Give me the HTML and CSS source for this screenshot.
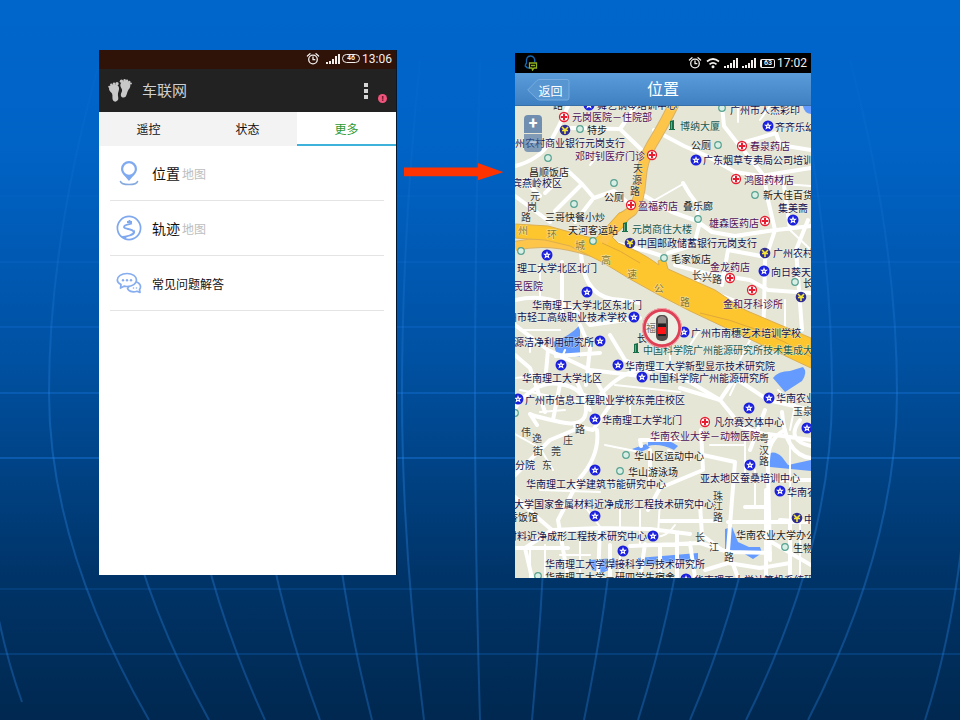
FILE: index.html
```html
<!DOCTYPE html>
<html lang="zh-CN">
<head>
<meta charset="utf-8">
<meta name="viewport" content="width=device-width, initial-scale=1">
<title>车联网</title>
<link rel="stylesheet" href="styles.css">
</head>
<body>
<svg class="backdrop" viewBox="0 0 960 720" preserveAspectRatio="none" aria-hidden="true">
  <defs>
    <linearGradient id="fade" x1="0" y1="0" x2="0" y2="720" gradientUnits="userSpaceOnUse">
      <stop offset="0" stop-color="#2a86e6" stop-opacity="0"/>
      <stop offset=".3" stop-color="#2a86e6" stop-opacity=".15"/>
      <stop offset=".6" stop-color="#2a86e6" stop-opacity=".35"/>
      <stop offset="1" stop-color="#1d6cc0" stop-opacity=".45"/>
    </linearGradient>
  </defs>
  <g class="latitudes">
    <path d="M0 196H960" opacity=".25"/><path d="M0 262H960" opacity=".4"/><path d="M0 327H960" opacity=".6"/><path d="M0 393H960" opacity=".8"/><path d="M0 458H960"/><path d="M0 589H960" opacity=".4"/><path d="M0 654H960" opacity=".5"/>
  </g>
  <g class="meridians">
    <path d="M-22 393Q-22 580 22 702"/>
    <path d="M100 60Q49 240 49 393T149 720"/>
    <path d="M155 60Q113 240 113 393T209 720"/>
    <path d="M225 60Q185 240 185 393T265 720"/>
    <path d="M290 60Q255 240 255 393T320 720"/>
    <path d="M355 60Q328 240 328 393T372 720"/>
    <path d="M420 60Q402 240 402 393T424 720"/>
    <path d="M480 60Q475 240 475 393T480 720"/>
    <path d="M535 60Q548 240 548 393T532 720"/>
    <path d="M595 60Q620 240 620 393T584 720"/>
    <path d="M660 60Q693 240 693 393T638 720"/>
    <path d="M725 60Q764 240 764 393T690 720"/>
    <path d="M795 60Q832 240 832 393T746 720"/>
    <path d="M850 60Q897 240 897 393T808 720"/>
    <path d="M970 393Q970 580 925 720"/>
  </g>
</svg>

<svg class="sprite" aria-hidden="true">
  <symbol id="alarm" viewBox="0 0 14 14">
    <g fill="none" stroke="currentColor" stroke-width="1.3" stroke-linecap="round"><circle cx="7" cy="7.5" r="4.3"/><path d="M7 5v2.7h1.8M1.4 4 4 1.7M12.600 4 10 1.700"/></g>
  </symbol>
  <symbol id="signal" viewBox="0 0 14 12">
    <path fill="currentColor" d="M0 9h2v2H0zM3 8h2v3H3zM6 6h2v5H6zM9 3h2v8H9zM12 1h2v10h-2z"/>
  </symbol>
  <symbol id="wifi" viewBox="0 0 14 12">
    <path fill="none" stroke="currentColor" stroke-width="1.700" d="M1 4.500q6-5 12 0M3.500 7.300q3.500-3 7 0"/><circle cx="7" cy="9.800" r="1.500" fill="currentColor"/>
  </symbol>
</svg>

<main class="slide">
  <section class="phone phone-list" aria-label="车联网">
    <div class="status status-warm">
      <svg class="ico-alarm"><use href="#alarm"/></svg>
      <svg class="ico-signal"><use href="#signal"/></svg>
      <span class="battery battery-pill">46</span>
      <time>13:06</time>
    </div>
    <header class="bar-dark">
      <svg class="feet" viewBox="0 0 24 24" aria-hidden="true">
        <g fill="#c8c8c8">
          <path d="M1 10c0-3.500 3-5.500 7-4.500 3.500 1 3.500 4.500 2.500 7-1 2.500-.5 4-.2 6.500.4 3-3.500 5-5.200 2.500C3.800 19.500 5 17 4 14.500 3.200 13 1 12 1 10z"/>
          <path d="M12.500 5c2-4.500 9-4 9.800.5.4 3.500-1.600 4.500-2.700 7-1 2.300-1 6-4 6-3.200 0-3.200-3.300-2-5.300 1-2 .3-3-.5-4.500-.7-1.500-1-2.400-.6-3.700z"/>
          <circle cx="1.300" cy="7.800" r="1.100"/><circle cx="3.300" cy="5.700" r="1.200"/><circle cx="6" cy="4.700" r="1.200"/><circle cx="9" cy="4.800" r="1.700"/>
          <circle cx="13.500" cy="2.200" r="1.700"/><circle cx="16.600" cy="1.300" r="1.200"/><circle cx="19" cy="1.700" r="1.200"/><circle cx="21.300" cy="2.900" r="1.200"/><circle cx="22.900" cy="4.600" r="1"/>
        </g>
      </svg>
      <h1>车联网</h1>
      <button class="menu" type="button" aria-label="菜单"><i></i><i></i><i></i></button>
      <span class="alert">!</span>
    </header>
    <nav class="tabs">
      <button type="button">遥控</button>
      <button type="button">状态</button>
      <button type="button" class="active">更多</button>
    </nav>
    <ul class="rows">
      <li><a href="#map">
        <svg viewBox="0 0 26 26" aria-hidden="true"><path fill="#80aaf0" fill-rule="evenodd" d="M13 1a8 8 0 0 1 8 8c0 5-5 7.500-8 12-3-4.500-8-7-8-12a8 8 0 0 1 8-8zm0 2.200A5.800 5.800 0 1 0 13 14.800 5.800 5.800 0 0 0 13 3.200z"/><path fill="none" stroke="#86a9df" stroke-width="1.600" stroke-linecap="round" d="M4.500 21.500c1 4 16 4 17 0"/></svg>
        <span class="big">位置</span><small>地图</small></a></li>
      <li><a href="#track">
        <svg viewBox="0 0 26 26" aria-hidden="true"><circle cx="13" cy="13" r="11.600" fill="none" stroke="#7fa8ee" stroke-width="1.700"/><path fill="none" stroke="#7fa8ee" stroke-width="1.800" stroke-linejoin="round" d="M13.500 5v3M11 7h5M16 8.500c-3 1-8 1.300-8 3.500 0 2.500 9.500 1.500 9.500 5"/><path fill="#7fa8ee" d="M18 14.500c2.500 3 .5 5.500-3 6.500-3 .8-5 1-5.500 3-2-.3-4-1.500-5-3 6 0 13-1.500 13.500-6.500z"/></svg>
        <span class="big">轨迹</span><small>地图</small></a></li>
      <li><a href="#faq">
        <svg viewBox="0 0 26 26" aria-hidden="true"><g fill="#fff" stroke="#86adf0" stroke-width="1.700" stroke-linejoin="round"><path d="M17.500 11.500c6 0 8.500 4.500 6 8l.5 3-3-1.300c-4.500 1.500-9 0-9.500-3z"/><path d="M11 3.500c5.500 0 9.500 2.800 9.500 6.500s-4 6.500-9.500 6.500c-1 0-2-.1-3-.3L4.500 18l.5-3.400C2.800 13.500 1.300 12 1.300 10c0-3.700 4.200-6.500 9.700-6.500z"/></g><g fill="#86adf0"><circle cx="7" cy="10.300" r="1.200"/><circle cx="11" cy="10.300" r="1.200"/><circle cx="15" cy="10.300" r="1.200"/><circle cx="17.500" cy="18" r=".8"/><circle cx="20.500" cy="18" r=".8"/></g></svg>
        <span>常见问题解答</span></a></li>
    </ul>
  </section>

  <svg class="arrow" viewBox="0 0 98 18" aria-hidden="true"><path fill="#f30" d="M0 4.500H73V0L98 9 73 17V13H0z"/></svg>

  <section class="phone phone-map" aria-label="位置">
    <div class="status status-black">
      <svg class="qq" viewBox="0 0 14 16" aria-hidden="true"><path fill="none" stroke="#1767ad" stroke-width="1.300" d="M5 13c-2 0-3-.5-2.700-1.500C1 12 .7 10.500 2.500 8 2 4 3 1 6.500 1S11 4 10.700 7"/><path fill="none" stroke="#8db021" stroke-width="1.300" d="M5.500 8h7v5H10l-1.500 2L8 13H5.500zM7 10.500h4"/></svg>
      <svg class="ico-alarm"><use href="#alarm"/></svg>
      <svg class="ico-wifi"><use href="#wifi"/></svg>
      <svg class="ico-signal"><use href="#signal"/></svg>
      <svg class="ico-signal"><use href="#signal"/></svg>
      <span class="battery battery-box">63</span>
      <time>17:02</time>
    </div>
    <header class="bar-blue">
      <button class="back" type="button">
        <svg viewBox="0 0 43 24" preserveAspectRatio="none" aria-hidden="true"><path fill="#5796d1" stroke="#77ace0" d="M.7 12 10 2.500Q11 1.500 13 1.500H40Q42 1.500 42 3.500V20Q42 22 40 22H13Q11 22 10 21z"/></svg>
        <span>返回</span>
      </button>
      <h2>位置</h2>
    </header>
    <div class="map">
      <svg class="map-canvas" viewBox="515 106 296 472" role="img" aria-label="地图">
        <defs>
          <g id="star"><circle r="5.500" fill="#1b20dc"/><path fill="#fff" d="M0-4 1-1.300 4-1.200 1.700.6 2.600 3.600 0 2-2.600 3.600-1.700.6-4-1.200-1-1.300z"/><circle cy=".3" r=".8" fill="#1b20dc"/></g>
          <g id="cross"><circle r="4.500" fill="#fff" stroke="#e51f31" stroke-width="1.300"/><path fill="#e51f31" d="M-1-3.200h2V-1h2.200v2H1v2.200h-2V1h-2.200v-2H-1z"/></g>
          <g id="bank"><circle r="5.300" fill="#302f91"/><path fill="none" stroke="#f5e536" stroke-width="1.600" d="M-3-3 0 0 3-3M0 0v4M-3 .5h6"/></g>
          <g id="dot"><circle r="3.300" fill="#d9efe6" stroke="#58a392" stroke-width="1.200"/></g>
          <g id="tower"><path fill="#17704a" d="M-2-4 2-5V4h1v1h-6V4h1z"/><path stroke="#8fc4a9" stroke-width=".7" d="M-.5-3V4"/></g>
        </defs>
        <rect x="515" y="106" width="296" height="472" fill="#e5e6d6"/>

        <g class="water">
          <path d="M553 342Q570 336 580 325V357L556 352z"/>
          <path d="M773 378Q778 371 790 371L803 367Q808 372 802 381L785 392z"/>
          <path d="M632 449 646 444 650 448 638 453zM648 441Q664 436 678 446L674 450Q660 443 648 446z"/>
          <path d="M770 453Q776 451 782 457L788 465 811 460V471L770 467z"/>
          <path d="M725 529 732 527 738 542 749 547 760 547 762 553 753 559 743 553 725 549z"/>
          <path d="M590 560 614 558 618 566 602 573 592 570zM638 558 698 553V560L638 566z"/>
          <path d="M803 106H811V114Q804 113 803 106z"/>
        </g>

        <g class="roads">
          <g class="wide">
            <path d="M568 106Q558 130 548 145T515 166M571 128 620 129 650 158M620 129 636 106"/>
            <path d="M545 193 568 171 582 184 555 211M582 184 594 198 614 191 633 207M592 200 575 222"/>
            <path d="M515 196 550 222M524 180 540 196"/>
            <path d="M654 130 684 146 707 156 735 172 760 176 811 168"/>
            <path d="M722 106 724 126 738 144 776 133 780 145 811 150"/>
            <path d="M683 183Q689 194 697 204L698 222 712 232 735 236 768 231 811 226"/>
            <path d="M640 193 672 212 700 222M700 222 694 245 668 253"/>
            <path d="M764 176 768 200 775 230 765 260 764 310 763 330M745 152 764 176"/>
            <path d="M783 178 790 229M808 220 796 250 802 330"/>
            <path d="M600 240Q640 248 662 256M675 265 705 273 750 280 768 290 811 293M700 273 696 286 738 302"/>
            <path d="M722 285 728 250 766 257"/>
            <path d="M562 262V318M581 250Q582 300 622 300L640 303M515 300Q560 290 590 325L640 318"/>
            <path d="M515 325 548 350 590 370 640 376M548 350 546 372M580 325 590 348 586 385"/>
            <path d="M515 355 530 368 545 412M556 356 600 353M610 335 625 360 650 372"/>
            <path d="M590 370 610 405 593 430 575 426M600 395Q640 350 690 382L720 400"/>
            <path d="M515 408Q535 380 560 384T586 408 560 422 530 414M530 414 537 425M560 384 553 420M575 378 590 410"/>
            <path d="M597 430Q600 455 580 478L558 520 568 578M574 430 550 440 515 475"/>
            <path d="M680 388 720 400 742 427 770 436 768 460M720 400 735 378 768 400 811 410M765 410 750 450"/>
            <path d="M701 430 703 470 660 488 648 510M703 455 735 462 728 550 738 578M641 446 640 440 680 440"/>
            <path d="M785 430Q765 440 768 470L770 560M782 412Q785 455 811 458M768 434 811 440M800 420Q785 440 811 446"/>
            <path d="M735 480H811M745 507H768M780 520 811 522M766 490V578M728 522H811M768 540 811 565M790 578V522"/>
            <path d="M660 521H720M700 505 702 535 722 550M650 450 650 480"/>
            <path d="M515 497 538 518 552 530 600 528 650 529 690 534M552 530 525 548 532 578M600 528 598 578M515 548H568"/>
            <path d="M630 546 700 543 728 552 770 553M640 578 645 544M660 578V545M677 534V578M695 578 690 543M610 545V578M705 570 728 563 760 568 790 563"/>
          </g>
          <g class="thin">
            <path d="M515 378 545 375M520 330H560M520 390 580 402M540 412 565 410M575 390 598 400M615 385 680 392M630 395V420M530 352V340M565 350 560 362M515 434 540 448 553 470M605 445 640 452M668 450 690 460M610 488H640M540 490 600 492M580 500 610 540M620 500V540M640 510V544M660 500 658 535M675 525Q665 540 650 536M730 395 738 378M778 390 795 405 790 430M745 440V475M710 445H745M755 470V505M790 440V520M800 525V578M785 300V330M738 106V122M760 120 770 106M590 165 600 153M655 200 683 184M755 182 811 186M790 230 811 250M730 320 750 340 740 360M700 330 690 345M780 345 811 350M670 345V365M540 265 540 300M530 550V578M545 545V578M560 555H590M580 540V575M620 548V575"/>
          </g>
        </g>

        <g class="motorways">
          <path class="casing narrow" d="M515 246Q545 239 578 248T612 259"/>
          <path class="fill narrow" d="M515 246Q545 239 578 248T612 259"/>
          <path class="casing avenue" d="M674 104Q662 128 652 144 642 160 641 180T632 211Q614 222 603 243"/>
          <path class="trunk" d="M515 224 548 226 588 237 596 238Q608 226 619 213L631 209Q632 222 612 237L618 243Q640 251 659 265L658 261 665 258 668 269 715 290 745 310 778 324 811 338V368L690 311 657 294 630 279 602 262 570 246 545 240 515 238z"/>
          <path class="fill avenue" d="M674 104Q662 128 652 144 642 160 641 180T632 211Q614 222 603 243"/>
          <path class="seam" d="M602 243Q620 250 640 263M700 313Q760 325 811 357"/>
        </g>

        <g class="icons">
          <use href="#star" x="589" y="105"/><use href="#star" x="768" y="126"/><use href="#star" x="696" y="160"/><use href="#star" x="793" y="220"/><use href="#star" x="547" y="255"/><use href="#star" x="764" y="271"/><use href="#star" x="587" y="292"/><use href="#star" x="634" y="317"/><use href="#star" x="684" y="332"/><use href="#star" x="600" y="341"/><use href="#star" x="561" y="365"/><use href="#star" x="618" y="365"/><use href="#star" x="642" y="377"/><use href="#star" x="518" y="399"/><use href="#star" x="595" y="419"/><use href="#star" x="769" y="398"/><use href="#star" x="749" y="408"/><use href="#star" x="807" y="428"/><use href="#star" x="595" y="470"/><use href="#star" x="750" y="465"/><use href="#star" x="780" y="491"/><use href="#star" x="595" y="516"/><use href="#star" x="653" y="536"/><use href="#star" x="623" y="551"/><use href="#star" x="686" y="579"/>
          <use href="#cross" x="564" y="117"/><use href="#cross" x="652" y="155"/><use href="#cross" x="742" y="146"/><use href="#cross" x="736" y="179"/><use href="#cross" x="765" y="221"/><use href="#cross" x="631" y="205"/><use href="#cross" x="730" y="278"/><use href="#cross" x="752" y="290"/><use href="#cross" x="705" y="422"/>
          <use href="#bank" x="565" y="130"/><use href="#bank" x="630" y="243"/><use href="#bank" x="765" y="253"/><use href="#bank" x="801" y="297"/><use href="#bank" x="797" y="518"/>
          <use href="#dot" x="722" y="108"/><use href="#dot" x="580" y="129"/><use href="#dot" x="548" y="158"/><use href="#dot" x="718" y="145"/><use href="#dot" x="755" y="195"/><use href="#dot" x="614" y="183"/><use href="#dot" x="574" y="204"/><use href="#dot" x="698" y="219"/><use href="#dot" x="593" y="241"/><use href="#dot" x="521" y="251"/><use href="#dot" x="664" y="258"/><use href="#dot" x="795" y="282"/><use href="#dot" x="515" y="413"/><use href="#dot" x="626" y="455"/><use href="#dot" x="620" y="471"/><use href="#dot" x="785" y="547"/><use href="#dot" x="538" y="576"/>
          <use href="#tower" x="672" y="125"/><use href="#tower" x="625" y="227"/><use href="#tower" x="636" y="348"/>
        </g>

        <g class="labels" transform="translate(0 4)">
          <g class="school">
            <text x="597" y="105">舞艺钢琴培训中心</text><text x="730" y="110">广州市人杰彩印</text>
            <text x="515" y="143">州农村商业银行元岗支行</text><text x="775" y="127">齐齐乐幼儿</text>
            <text x="703" y="160">广东烟草专卖局公司培训</text><text x="512" y="183">宾燕岭校区</text><text x="778" y="208">集美斋</text>
            <text x="637" y="243">中国邮政储蓄银行元岗支行</text><text x="773" y="253">广州农村</text><text x="771" y="272">向日葵天</text>
            <text x="517" y="268">理工大学北区北门</text><text x="532" y="305">华南理工大学北区东北门</text>
            <text x="507" y="317">州市轻工高级职业技术学校</text><text x="691" y="333">广州市南穗艺术培训学校</text>
            <text x="514" y="342">源洁净利用研究所</text><text x="522" y="378">华南理工大学北区</text>
            <text x="625" y="366">华南理工大学新型显示技术研究院</text><text x="649" y="378">中国科学院广州能源研究所</text>
            <text x="525" y="400">广州市信息工程职业学校东莞庄校区</text><text x="602" y="420">华南理工大学北门</text>
            <text x="776" y="398">华南农业</text><text x="714" y="422">凡尔赛文体中心</text><text x="515" y="465">分院</text>
            <text x="526" y="484">华南理工大学建筑节能研究中心</text><text x="700" y="478">亚太地区蚕桑培训中心</text><text x="787" y="492">华南农</text>
            <text x="514" y="504">大学国家金属材料近净成形工程技术研究中心</text><text x="507" y="536">材料近净成形工程技术研究中心</text>
            <text x="804" y="519">中</text><text x="545" y="564">华南理工大学焊接科学与技术研究所</text><text x="694" y="580">华南理工大学计算机系统研</text>
          </g>
          <g class="medical">
            <text x="572" y="117">元岗医院－住院部</text><text x="575" y="156">邓时钊医疗门诊</text><text x="750" y="146">春泉药店</text><text x="744" y="180">鸿图药材店</text>
            <text x="709" y="223">雄森医药店</text><text x="638" y="206">盈福药店</text><text x="710" y="267">金龙药店</text><text x="723" y="304">金和牙科诊所</text><text x="513" y="286">民医院</text><text x="650" y="436">华南农业大学－动物医院</text>
          </g>
          <g class="building">
            <text x="680" y="126">博纳大厦</text><text x="632" y="229">元岗商住大楼</text><text x="643" y="350">中国科学院广州能源研究所技术集成大</text>
          </g>
          <g class="place">
            <text x="553" y="105">路</text><text x="587" y="130">特步</text><text x="529" y="172">昌顺饭店</text><text x="691" y="145">公厕</text><text x="763" y="195">新大佳百货</text><text x="604" y="197">公厕</text>
            <text x="683" y="206">叠乐廊</text><text x="545" y="217">三哥快餐小炒</text><text x="568" y="230">天河客运站</text><text x="671" y="259">毛家饭店</text><text x="803" y="283">长</text>
            <text x="634" y="456">华山区运动中心</text><text x="628" y="472">华山游泳场</text><text x="508" y="517">香饭馆</text><text x="736" y="535">华南农业大学办公</text><text x="793" y="548">生物</text><text x="545" y="577">华南理工大学－研四学生宿舍</text>
            <text x="646" y="328">福居</text><text x="637" y="338">长</text>
          </g>
          <g class="street">
            <text x="633 632 630" y="168 180 191">天源路</text><text x="530 527 521" y="196 207 217">元岗路</text><text x="692 702 712" y="275 277 279">长兴路</text>
            <text x="793 803" y="411 411">玉泉</text><text x="759 759 759" y="438 450 461">粤汉路</text><text x="521 532 533" y="432 438 451">伟逸街</text>
            <text x="542 551 563 575" y="465 451 440 429">东莞庄路</text><text x="713 713 713" y="496 506 517">珠江路</text><text x="695 709 724" y="537 547 557">长江路</text>
          </g>
          <g class="motorway-name"><text x="518 547 575 601 627 654 680" y="230 234 245 260 274 288 302">州环城高速公路</text></g>
        </g>

        <g class="vehicle">
          <circle cx="662" cy="328" r="18" fill="#fff" fill-opacity=".35" stroke="#de4155" stroke-width="3.500"/>
          <circle cx="662" cy="328" r="19.500" fill="none" stroke="#f5a6ad"/>
          <rect x="656" y="315" width="12" height="26" rx="5" fill="#514b49"/>
          <path fill="#918a87" d="M658 318Q662 314 666 318V323H658z"/>
          <rect x="658" y="324" width="8" height="12" rx="1" fill="#241f20"/>
          <rect x="658" y="327" width="8" height="7" fill="#ff1417"/>
        </g>
      </svg>
      <div class="zoom">
        <button type="button" aria-label="放大">+</button>
        <button type="button" aria-label="缩小">−</button>
      </div>
    </div>
  </section>
</main>
</body>
</html>
```
FILE: styles.css
```css
* { box-sizing: border-box; }

body {
  margin: 0;
  min-height: 100vh;
  position: relative;
  overflow-x: hidden;
  background: linear-gradient(#0066cc 0%, #0063c6 20%, #0051a2 50%, #003468 80%, #002850 100%);
  font-family: Roboto, "Noto Sans CJK SC", sans-serif;
  color: #111;
}

h1, h2, ul { margin: 0; padding: 0; font-weight: 400; }
button { border: 0; padding: 0; background: none; font: inherit; color: inherit; }

.backdrop {
  position: absolute;
  inset: 0;
  width: 100%;
  height: 100%;
}
.latitudes path { fill: none; stroke: #1573d6; }
.meridians path { fill: none; stroke: url(#fade); stroke-width: 2; }
.sprite { position: absolute; width: 0; height: 0; }

.slide {
  position: relative;
  display: grid;
  grid-template-columns: 99fr 298fr 118fr 296fr 149fr;
  align-items: start;
  padding: 50px 0;
}

.phone-list {
  grid-column: 2;
  min-height: 525px;
  background: #fff;
  border-right: 1px solid #04172c;
}
.phone-map { grid-column: 4; margin-top: 3px; }

.arrow {
  grid-column: 3;
  width: 84%;
  margin: 113px 0 0 7px;
}

/* status bars */
.status {
  display: flex;
  align-items: center;
  justify-content: flex-end;
  gap: 4px;
  padding-right: 4px;
  font-size: 12px;
  line-height: 18px;
  color: #f2efed;
}
.status-warm { height: 19px; padding-bottom: 2px; background: #2f1208; }
.status-black { height: 20px; background: #000; }
.status time { margin-left: -2px; }
.ico-alarm { width: 14px; height: 14px; }
.ico-signal { width: 14px; height: 12px; }
.ico-wifi { width: 14px; height: 12px; }
.status-warm .ico-alarm { margin-right: 2px; }
.qq { width: 14px; height: 16px; margin: 0 auto 0 9px; }
.battery {
  display: block;
  border: 1px solid currentColor;
  font-size: 7px;
  font-weight: 700;
  line-height: 7px;
  text-align: center;
}
.battery-pill { width: 18px; height: 9px; border-radius: 5px; }
.battery-box { width: 15px; height: 9px; border-radius: 2px; border-left-width: 2px; }
.status-warm .battery { margin-left: -2px; }

/* dark app bar */
.bar-dark {
  display: flex;
  align-items: center;
  height: 43px;
  padding: 0 9px;
  background: #222;
  color: #cfcfcf;
}
.feet { width: 24px; height: 24px; }
.bar-dark h1 { margin-left: 10px; font-size: 15px; line-height: 20px; }
.menu { display: grid; gap: 2px; margin-left: auto; padding: 4px; }
.menu i { width: 4px; height: 4px; background: #d5d5d5; }
.alert {
  width: 9px;
  height: 9px;
  margin: 15px 0 0 6px;
  border-radius: 50%;
  background: #f0547c;
  color: #401020;
  font-size: 8px;
  font-weight: 700;
  line-height: 9px;
  text-align: center;
}

.tabs { display: grid; grid-template-columns: repeat(3, 1fr); background: #f3f3f3; }
.tabs button { height: 34px; font-size: 12px; border-bottom: 2px solid transparent; }
.tabs .active { background: #fff; color: #2d9a33; border-bottom-color: #3fb2dc; }

.rows { list-style: none; padding: 0 12px 0 11px; }
.rows li { border-bottom: 1px solid #e4e4e4; }
.rows a {
  display: flex;
  align-items: center;
  height: 54px;
  padding-left: 6px;
  color: #111;
  font-size: 12px;
  text-decoration: none;
}
.rows svg { width: 26px; height: 26px; margin-right: 10px; }
.rows .big { font-size: 14px; }
.rows small { margin-left: 2px; font-size: 12px; color: #bdbdbd; }

/* map screen */
.bar-blue {
  display: grid;
  grid-template-columns: 1fr auto 1fr;
  align-items: center;
  height: 33px;
  padding: 2px 12px 0;
  background: linear-gradient(#5b9ddb, #3e80c1);
  border-bottom: 1px solid #376fa6;
  color: #fff;
}
.bar-blue h2 { font-size: 16px; line-height: 24px; }
.back { position: relative; width: 43px; height: 24px; font-size: 12px; }
.back svg { position: absolute; inset: 0; width: 100%; height: 100%; }
.back span { position: relative; padding-left: 4px; }

.map { position: relative; }
.map-canvas { display: block; width: 100%; height: auto; }

.zoom {
  position: absolute;
  top: 8px;
  left: 8px;
  display: grid;
  gap: 1px;
  padding: 1px;
}
.zoom button {
  width: 18px;
  height: 18px;
  background: rgba(62, 105, 160, 0.7);
  color: #fff;
  font-size: 16px;
  font-weight: 700;
  line-height: 16px;
}
.zoom button:first-child { border-radius: 4px 4px 0 0; }
.zoom button:last-child { border-radius: 0 0 4px 4px; background: rgba(62, 105, 160, 0.6); color: #b8cbe0; }

.water path { fill: #659bff; }
.roads path { fill: none; stroke: #fff; stroke-linejoin: round; stroke-linecap: round; }
.roads .wide path { stroke-width: 4; }
.roads .thin path { stroke-width: 2; }
.motorways path { fill: none; stroke-linejoin: round; }
.motorways .casing { stroke: #d8b26a; }
.motorways .fill { stroke: #fdc64a; }
.motorways .casing.narrow { stroke-width: 10; }
.motorways .fill.narrow { stroke-width: 8; }
.motorways .casing.avenue { stroke-width: 11; }
.motorways .fill.avenue { stroke-width: 9; }
.motorways .trunk { fill: #fdc62f; stroke: #dcae50; stroke-width: 1; }
.motorways .seam { stroke: #e0a83a; stroke-width: 1; }

.labels text {
  font-family: "Noto Sans CJK SC", sans-serif;
  font-size: 10px;
  stroke: #f6f6ee;
  stroke-width: 1px;
  stroke-opacity: 0.6;
  paint-order: stroke;
}
.labels .school { fill: #121250; }
.labels .medical { fill: #4d1259; }
.labels .building { fill: #175850; }
.labels .place { fill: #1a1a1a; }
.labels .street { fill: #3a3a3a; }
.labels .motorway-name { fill: #87762a; }
```
